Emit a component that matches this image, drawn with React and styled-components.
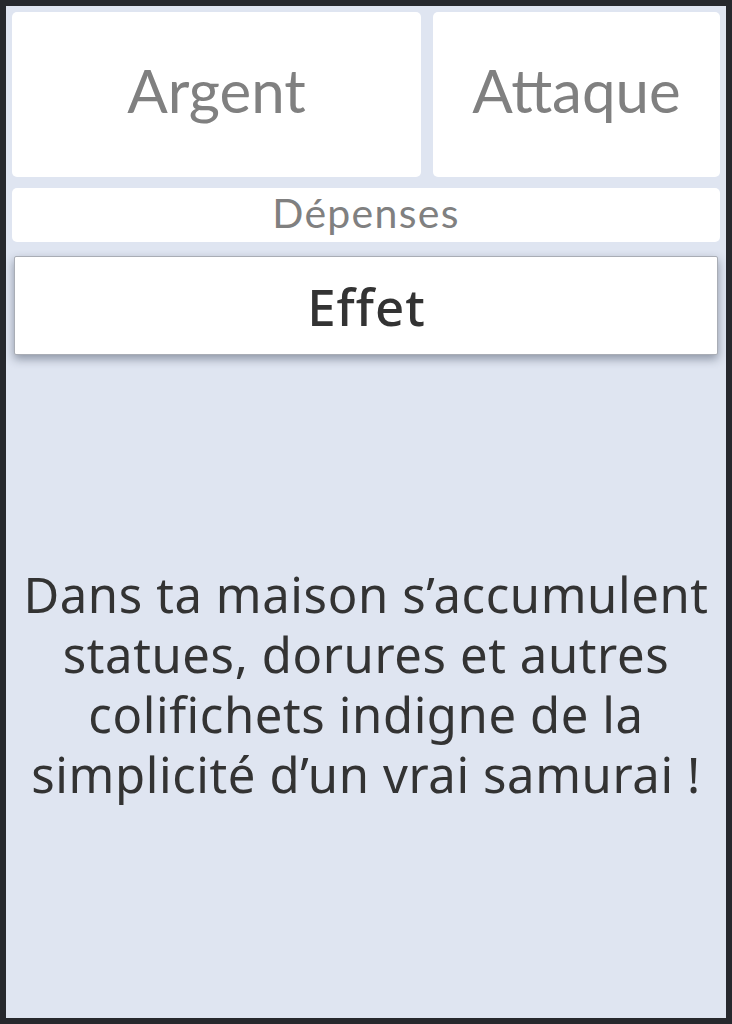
import React from "react";
import styled, { createGlobalStyle } from "styled-components";

const Global = createGlobalStyle`
  html, body { margin: 0; padding: 0; height: 100%; }
  body { background: #26282d; }
  #root { height: 100%; }
`;

const Frame = styled.div`
  box-sizing: border-box;
  height: 1024px;
  width: 732px;
  padding: 6px;
  background: #26282d;
`;

const Screen = styled.div`
  box-sizing: border-box;
  height: 100%;
  background: #dfe5f1;
  padding: 6px;
  display: flex;
  flex-direction: column;
`;

const TopRow = styled.div`
  display: flex;
  gap: 12px;
  height: 165px;
`;

const StatCard = styled.div`
  flex: ${(p) => p.$grow};
  box-sizing: border-box;
  background: #fff;
  border-radius: 5px;
  display: flex;
  align-items: center;
  justify-content: center;
  padding-bottom: 10px;
  font-family: Lato, "Liberation Sans", sans-serif;
  font-size: 60px;
  color: #808080;
`;

const CostBar = styled.div`
  margin-top: 11px;
  height: 54px;
  box-sizing: border-box;
  padding: 0 0 6px 0;
  background: #fff;
  border-radius: 5px;
  display: flex;
  align-items: center;
  justify-content: center;
  font-family: Lato, "Liberation Sans", sans-serif;
  font-size: 41px;
  letter-spacing: 1.3px;
  color: #808080;
`;

const EffectHeader = styled.div`
  margin: 14px 2px 0;
  height: 99px;
  box-sizing: border-box;
  padding-left: 1px;
  background: #fff;
  border: 1px solid #a9adb5;
  border-radius: 2px;
  box-shadow: 0 4px 10px rgba(40, 50, 70, 0.45);
  display: flex;
  align-items: center;
  justify-content: center;
  font-family: "Noto Sans", "Open Sans", sans-serif;
  font-weight: 500;
  font-size: 51px;
  letter-spacing: 1px;
  color: #333;
`;

const EffectBody = styled.div`
  flex: 1;
  display: flex;
  align-items: center;
  justify-content: center;
  text-align: center;
  font-family: "Noto Sans", "Open Sans", sans-serif;
  font-size: 49px;
  letter-spacing: 0.6px;
  line-height: 60px;
  color: #333;
`;

export default function App() {
  return (
    <>
      <Global />
      <Frame>
        <Screen>
          <TopRow>
            <StatCard $grow={409}>Argent</StatCard>
            <StatCard $grow={287}>Attaque</StatCard>
          </TopRow>
          <CostBar>Dépenses</CostBar>
          <EffectHeader>Effet</EffectHeader>
          <EffectBody>
            Dans ta maison s’accumulent statues, dorures et autres colifichets indigne de la simplicité d’un vrai samurai !
          </EffectBody>
        </Screen>
      </Frame>
    </>
  );
}
